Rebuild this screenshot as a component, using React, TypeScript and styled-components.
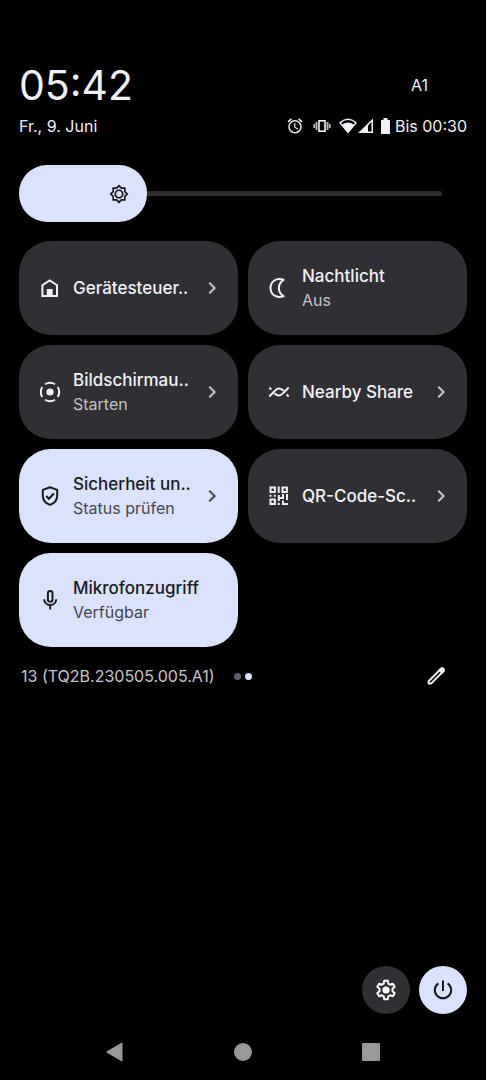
import React from "react";
import styled, { createGlobalStyle } from "styled-components";
import {
  MdChevronRight,
  MdOutlineAlarm,
  MdOutlineBrightness5,
} from "react-icons/md";

const Global = createGlobalStyle`
  * { box-sizing: border-box; }
  html, body, #root { height: 100%; }
  body {
    margin: 0;
    background: #000;
    color: #f1f0f7;
    font-family: Inter, Roboto, sans-serif;
  }
  button { font: inherit; color: inherit; border: 0; padding: 0; background: none; cursor: pointer; }
`;

const Screen = styled.div`
  min-height: 100%;
  display: flex;
  flex-direction: column;
  padding: 64px 19px 0;
`;

const HeaderRow = styled.div`
  display: flex;
  align-items: center;
  justify-content: space-between;
`;

const Clock = styled.time`
  font-size: 41px;
  line-height: 42px;
  font-weight: 400;
`;

const Carrier = styled.span`
  font-size: 16px;
  line-height: 20px;
  margin-right: 39px;
`;

const StatusRow = styled(HeaderRow)`
  margin-top: 10px;
  font-size: 16px;
  line-height: 20px;
`;

const StatusIcons = styled.div`
  display: flex;
  align-items: center;
  svg { display: block; }
`;

const IconSlot = styled.span<{ $gap: number }>`
  margin-right: ${(p) => p.$gap}px;
`;

const Slider = styled.div`
  position: relative;
  display: flex;
  align-items: center;
  height: 57px;
  margin-top: 29px;
`;

const Track = styled.div`
  flex: 1;
  height: 5px;
  margin-right: 25px;
  border-radius: 3px;
  background: #303034;
`;

const Fill = styled.div`
  position: absolute;
  inset: 0 auto 0 0;
  display: flex;
  align-items: center;
  justify-content: flex-end;
  padding-right: 18px;
  border-radius: 28px;
  background: #dae2fd;
  color: #1a1b20;
`;

const Range = styled.input`
  position: absolute;
  inset: 0;
  width: 100%;
  height: 100%;
  margin: 0;
  opacity: 0;
`;

const Tiles = styled.div`
  display: grid;
  grid-template-columns: 1fr 1fr;
  grid-auto-rows: 94px;
  gap: 10px;
  margin-top: 19px;
`;

const TileButton = styled.button<{ $active?: boolean }>`
  && {
    display: flex;
    align-items: center;
    min-width: 0;
    padding: 0 14px 0 19px;
    border-radius: 32px;
    text-align: left;
    background: ${(p) => (p.$active ? "#dae2fd" : "#303034")};
    color: ${(p) => (p.$active ? "#1a1b20" : "#f1f0f7")};
  }
  svg { flex: none; display: block; }
`;

const TileText = styled.span`
  flex: 1;
  min-width: 0;
  margin-left: 11px;
  white-space: nowrap;
`;

const TileTitle = styled.span`
  display: block;
  font-size: 17px;
  line-height: 24px;
  font-weight: 500;
`;

const TileState = styled.span<{ $active?: boolean }>`
  display: block;
  font-size: 16px;
  line-height: 24px;
  color: ${(p) => (p.$active ? "#45464f" : "#c2c1ca")};
`;

const Chevron = styled(MdChevronRight)<{ $active?: boolean }>`
  color: ${(p) => (p.$active ? "#45464f" : "#c6c6d0")};
`;

const Footer = styled.footer`
  display: flex;
  align-items: center;
  height: 24px;
  margin-top: 17px;
  padding: 0 19px 0 2px;
`;

const Build = styled.span`
  font-size: 16px;
  line-height: 24px;
  color: #c6c6d0;
`;

const Dots = styled.span`
  display: flex;
  gap: 4px;
  margin-left: 19px;
`;

const Dot = styled.i<{ $on?: boolean }>`
  width: 7px;
  height: 7px;
  border-radius: 50%;
  background: ${(p) => (p.$on ? "#dae2fd" : "#5c5f6b")};
`;

const EditButton = styled.button`
  && { margin-left: auto; }
  svg { display: block; }
`;

const Actions = styled.div`
  display: flex;
  justify-content: flex-end;
  gap: 9px;
  margin-top: auto;
`;

const RoundButton = styled.button<{ $active?: boolean }>`
  && {
    display: grid;
    place-items: center;
    width: 48px;
    height: 48px;
    border-radius: 50%;
    background: ${(p) => (p.$active ? "#dae2fd" : "#303034")};
    color: ${(p) => (p.$active ? "#1a1b20" : "#fff")};
  }
`;

const NavBar = styled.nav`
  display: flex;
  justify-content: space-between;
  padding: 26px 84px 16px;
  svg { display: block; }
`;

type IconProps = { size?: number; children: React.ReactNode };
const Line = ({ size = 24, children }: IconProps) => (
  <svg width={size} height={size} viewBox="0 0 24 24" fill="none" stroke="currentColor" strokeWidth="2" aria-hidden="true">
    {children}
  </svg>
);

const HomeIcon = () => (
  <Line>
    <path d="M4.400 20V9.200L11.700 4.400l7.300 4.800V20z" />
    <path d="M8.800 13h5.800v7H8.800z" fill="currentColor" stroke="none" />
  </Line>
);
const MoonIcon = () => (
  <Line>
    <path d="M16.600 3.800C8.500 1.200 3.500 6.200 3.500 12s5 10.800 13.100 8.200C10.300 16.200 10.300 7.800 16.600 3.800z" strokeLinejoin="round" />
  </Line>
);
const RecordIcon = () => (
  <Line>
    <circle cx="12" cy="12" r="3.600" fill="currentColor" stroke="none" />
    <circle cx="12" cy="12" r="9.200" pathLength="360" strokeDasharray="66 24" strokeDashoffset="33" />
  </Line>
);
const NearbyIcon = () => (
  <Line>
    <path d="M2.300 16.500L7.200 11.500C10 8 13.200 7.500 16.600 10.800" />
    <path d="M21.700 7.500L16.800 12.500C14 16 10.800 16.500 7.400 13.200" />
    <path d="M2.300 7.600l2 1.900M21.700 16.400l-2-1.900" />
  </Line>
);
const ShieldIcon = () => (
  <Line>
    <path d="M12 3.200l7.200 2.700v5.600c0 4.300-3 7.900-7.200 9.400-4.200-1.500-7.200-5.100-7.200-9.400V5.900z" strokeLinejoin="round" />
    <path d="M8.200 12l2.700 2.700 5-5.200" />
  </Line>
);
const QrIcon = () => (
  <svg width="24" height="24" viewBox="0 0 24 24" fill="currentColor" aria-hidden="true">
    <path d="M3.500 3.500h4.400v4.400H3.500zM15.500 3.500h4.400v4.400h-4.400zM3.500 15.500h4.400v4.400H3.500z" fill="none" stroke="currentColor" strokeWidth="2" />
    <path d="M10.700 2.500h2v6.400h-2zM2.500 10.700h2v2h-2zM6.700 10.700h2v2h-2zM15 10h2v5h-4.200v2h-2v-6h2v2H15zM19 10h2v6h-2zM10.700 18.800h2v2.100h-2zM15 16.500h2v2.400h4v2h-6z" />
  </svg>
);
const MicIcon = () => (
  <Line>
    <rect x="9.900" y="3" width="4.600" height="10.800" rx="2.300" />
    <path d="M6.200 11.300c0 3.300 2.600 5.700 6 5.700s6-2.400 6-5.700M12.200 17v4.500" />
  </Line>
);
const GearIcon = () => (
  <Line>
    <path
      d="M10.200 2.800h3.600l.5 2.800 1.900 1.100 2.700-1 1.800 3.100-2.200 1.900v2.600l2.200 1.900-1.800 3.100-2.700-1-1.900 1.100-.5 2.800h-3.600l-.5-2.800-1.900-1.100-2.700 1-1.800-3.100 2.200-1.900v-2.600L3.300 8.800l1.800-3.100 2.700 1 1.900-1.100z"
      strokeLinejoin="round"
    />
    <circle cx="12" cy="12" r="3.600" fill="currentColor" stroke="none" />
  </Line>
);
const PowerIcon = () => (
  <Line>
    <path d="M12 2.500v10.500M7.400 5.300A8.200 8.200 0 1 0 16.600 5.300" />
  </Line>
);
const PencilIcon = () => (
  <Line>
    <path d="M4.600 19.600v-2.400L15.800 6l2.400 2.400L7 19.600z" strokeLinejoin="round" />
    <path d="M14.200 5.900l2.600-2.300q1.500-1 2.800.1l.9.900q1.100 1.400.1 2.800l-2.400 2.500z" fill="currentColor" stroke="none" />
  </Line>
);

const tiles = [
  { title: "Gerätesteuer..", icon: <HomeIcon />, more: true },
  { title: "Nachtlicht", state: "Aus", icon: <MoonIcon /> },
  { title: "Bildschirmau..", state: "Starten", icon: <RecordIcon />, more: true },
  { title: "Nearby Share", icon: <NearbyIcon />, more: true },
  { title: "Sicherheit un..", state: "Status prüfen", icon: <ShieldIcon />, more: true, active: true },
  { title: "QR-Code-Sc..", icon: <QrIcon />, more: true },
  { title: "Mikrofonzugriff", state: "Verfügbar", icon: <MicIcon />, active: true },
];

export default function App() {
  const [level, setLevel] = React.useState(128);
  return (
    <>
      <Global />
      <Screen>
        <HeaderRow>
          <Clock>05:42</Clock>
          <Carrier>A1</Carrier>
        </HeaderRow>
        <StatusRow>
          <span>Fr., 9. Juni</span>
          <StatusIcons>
            <IconSlot $gap={9}><MdOutlineAlarm size={18} /></IconSlot>
            <IconSlot $gap={8}>
              <svg width="18" height="16" viewBox="0 0 18 16" fill="none" stroke="currentColor" aria-hidden="true">
                <rect x="6" y="2.800" width="6" height="10.400" strokeWidth="1.600" />
                <path d="M3.500 4v8M14.500 4v8" strokeWidth="2" opacity=".75" />
                <path d="M1.200 6v4M16.800 6v4" strokeWidth="1.600" opacity=".8" />
              </svg>
            </IconSlot>
            <IconSlot $gap={1}>
              <svg width="18" height="16" viewBox="0 0 18 16" aria-hidden="true">
                <path d="M1 4.800Q9-2.200 17 4.800L9 14.500z" fill="none" stroke="currentColor" strokeWidth="1.400" />
                <path d="M3 6.800Q9 2.200 15 6.800L9 14.500z" fill="currentColor" />
              </svg>
            </IconSlot>
            <IconSlot $gap={8}>
              <svg width="15" height="16" viewBox="0 0 15 16" aria-hidden="true">
                <path d="M0 15L15 .5V15z" fill="currentColor" />
                <path d="M10 7.500l3.500-3.500v9.500H10z" fill="#000" />
              </svg>
            </IconSlot>
            <IconSlot $gap={5}>
              <svg width="9" height="16" viewBox="0 0 9 16" aria-hidden="true">
                <path d="M2.500 0h4v2H9v14H0V2h2.500z" fill="currentColor" />
              </svg>
            </IconSlot>
            <span>Bis 00:30</span>
          </StatusIcons>
        </StatusRow>

        <Slider>
          <Track />
          <Fill style={{ width: level }}>
            <MdOutlineBrightness5 size={20} />
          </Fill>
          <Range
            type="range"
            aria-label="Helligkeit"
            min={57}
            max={422}
            value={level}
            onChange={(e) => setLevel(Number(e.target.value))}
          />
        </Slider>

        <Tiles>
          {tiles.map((t) => (
            <TileButton key={t.title} $active={t.active}>
              {t.icon}
              <TileText>
                <TileTitle>{t.title}</TileTitle>
                {t.state && <TileState $active={t.active}>{t.state}</TileState>}
              </TileText>
              {t.more && <Chevron size={24} $active={t.active} />}
            </TileButton>
          ))}
        </Tiles>

        <Footer>
          <Build>13 (TQ2B.230505.005.A1)</Build>
          <Dots><Dot /><Dot $on /></Dots>
          <EditButton aria-label="Bearbeiten"><PencilIcon /></EditButton>
        </Footer>

        <Actions>
          <RoundButton aria-label="Einstellungen"><GearIcon /></RoundButton>
          <RoundButton aria-label="Ein/Aus" $active><PowerIcon /></RoundButton>
        </Actions>

        <NavBar>
          <button aria-label="Zurück">
            <svg width="24" height="24" viewBox="0 0 24 24"><path d="M19 3v18L3.500 12z" fill="#999" stroke="#999" strokeLinejoin="round" /></svg>
          </button>
          <button aria-label="Startbildschirm">
            <svg width="24" height="24" viewBox="0 0 24 24"><circle cx="12" cy="12" r="9" fill="#999" /></svg>
          </button>
          <button aria-label="Übersicht">
            <svg width="24" height="24" viewBox="0 0 24 24"><rect x="3" y="3" width="18" height="18" rx="1" fill="#999" /></svg>
          </button>
        </NavBar>
      </Screen>
    </>
  );
}
